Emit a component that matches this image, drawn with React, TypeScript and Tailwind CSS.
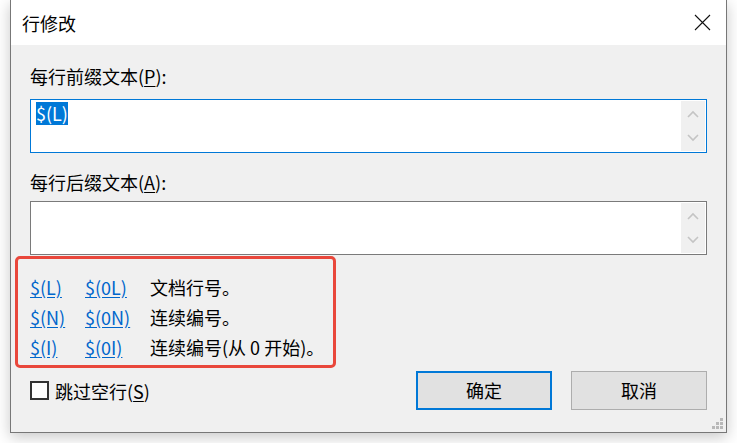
import React from 'react';

const FONT = { fontFamily: '"Noto Sans CJK SC", "Noto Sans", sans-serif' };

function Chevron({ up }: { up?: boolean }) {
  return (
    <svg width="12" height="8" viewBox="0 0 12 8" className="block">
      <path
        d={up ? 'M1 7 L6 2 L11 7' : 'M1 1 L6 6 L11 1'}
        fill="none"
        stroke="#c4c4c4"
        strokeWidth="1.6"
      />
    </svg>
  );
}

function TextBox({ active, children }: { active?: boolean; children?: React.ReactNode }) {
  return (
    <div
      className={`flex h-[54px] bg-white border ${active ? 'border-[#0078d7]' : 'border-[#7a7a7a]'}`}
    >
      <div className="flex-1 pl-[5px] pt-[2px]">{children}</div>
      <div className="w-[24px] my-[1px] mr-[1px] bg-[#f0f0f0] flex flex-col items-center justify-between py-[9px]">
        <Chevron up />
        <Chevron />
      </div>
    </div>
  );
}

const ROWS = [
  { a: '$(L)', b: '$(0L)', desc: '文档行号。' },
  { a: '$(N)', b: '$(0N)', desc: '连续编号。' },
  { a: '$(I)', b: '$(0I)', desc: '连续编号(从 0 开始)。' },
];

export default function App() {
  return (
    <div className="w-[737px] h-[443px] bg-white overflow-hidden text-[#000]" style={FONT}>
      <div className="ml-[10px] w-[717px] h-[433px] flex flex-col border-x border-b border-[#777] shadow-[0_4px_14px_rgba(0,0,0,0.22)]">
        {/* title bar */}
        <div className="h-[45px] bg-white flex items-center justify-between pl-[11px] pr-[15px]">
          <span className="text-[18px] leading-[24px]">行修改</span>
          <svg width="17" height="17" viewBox="0 0 17 17">
            <path d="M1 1 L16 16 M16 1 L1 16" stroke="#111" strokeWidth="1.1" />
          </svg>
        </div>

        {/* body */}
        <div className="flex-1 bg-[#f0f0f0] px-[19px] pt-[19px] flex flex-col relative">
          <div className="text-[18px] leading-[24px]">
            每行前缀文本(<span className="underline underline-offset-2">P</span>):
          </div>
          <div className="mt-[11px]">
            <TextBox active>
              <span className="inline-block bg-[#0078d7] text-white text-[18px] leading-[23px]">$(L)</span>
            </TextBox>
          </div>

          <div className="mt-[17px] text-[18px] leading-[24px]">
            每行后缀文本(<span className="underline underline-offset-2">A</span>):
          </div>
          <div className="mt-[7px]">
            <TextBox />
          </div>

          <div className="mt-[1px] -ml-[15px] w-[321px] border-[3px] border-[#e9473b] rounded-[5px] pt-[16px] pb-[6px] pl-[12px] flex flex-col gap-[6px]">
            {ROWS.map((r) => (
              <div key={r.a} className="flex text-[18px] leading-[24px]">
                <span className="w-[55px] text-[#0066cc] underline underline-offset-2">{r.a}</span>
                <span className="w-[65px] text-[#0066cc] underline underline-offset-2">{r.b}</span>
                <span>{r.desc}</span>
              </div>
            ))}
          </div>

          <div className="mt-[3px] flex items-center">
            <div className="w-[19px] h-[19px] bg-white border-2 border-[#333]" />
            <span className="ml-[6px] text-[18px] leading-[24px]">
              跳过空行(<span className="underline underline-offset-2">S</span>)
            </span>
            <div className="ml-auto flex gap-[19px]">
              <button className="w-[136px] h-[39px] bg-[#e1e1e1] border-2 border-[#0078d7] text-[18px]">
                确定
              </button>
              <button className="w-[136px] h-[39px] bg-[#e1e1e1] border border-[#adadad] text-[18px]">
                取消
              </button>
            </div>
          </div>

          {/* size grip */}
          <svg width="12" height="12" viewBox="0 0 12 12" className="absolute right-[2px] bottom-[2px]">
            <rect x="8" y="0" width="3" height="3" fill="#b8b8b8" />
            <rect x="4" y="4" width="3" height="3" fill="#b8b8b8" />
            <rect x="8" y="4" width="3" height="3" fill="#b8b8b8" />
            <rect x="0" y="8" width="3" height="3" fill="#b8b8b8" />
            <rect x="4" y="8" width="3" height="3" fill="#b8b8b8" />
            <rect x="8" y="8" width="3" height="3" fill="#b8b8b8" />
          </svg>
        </div>
      </div>
    </div>
  );
}
